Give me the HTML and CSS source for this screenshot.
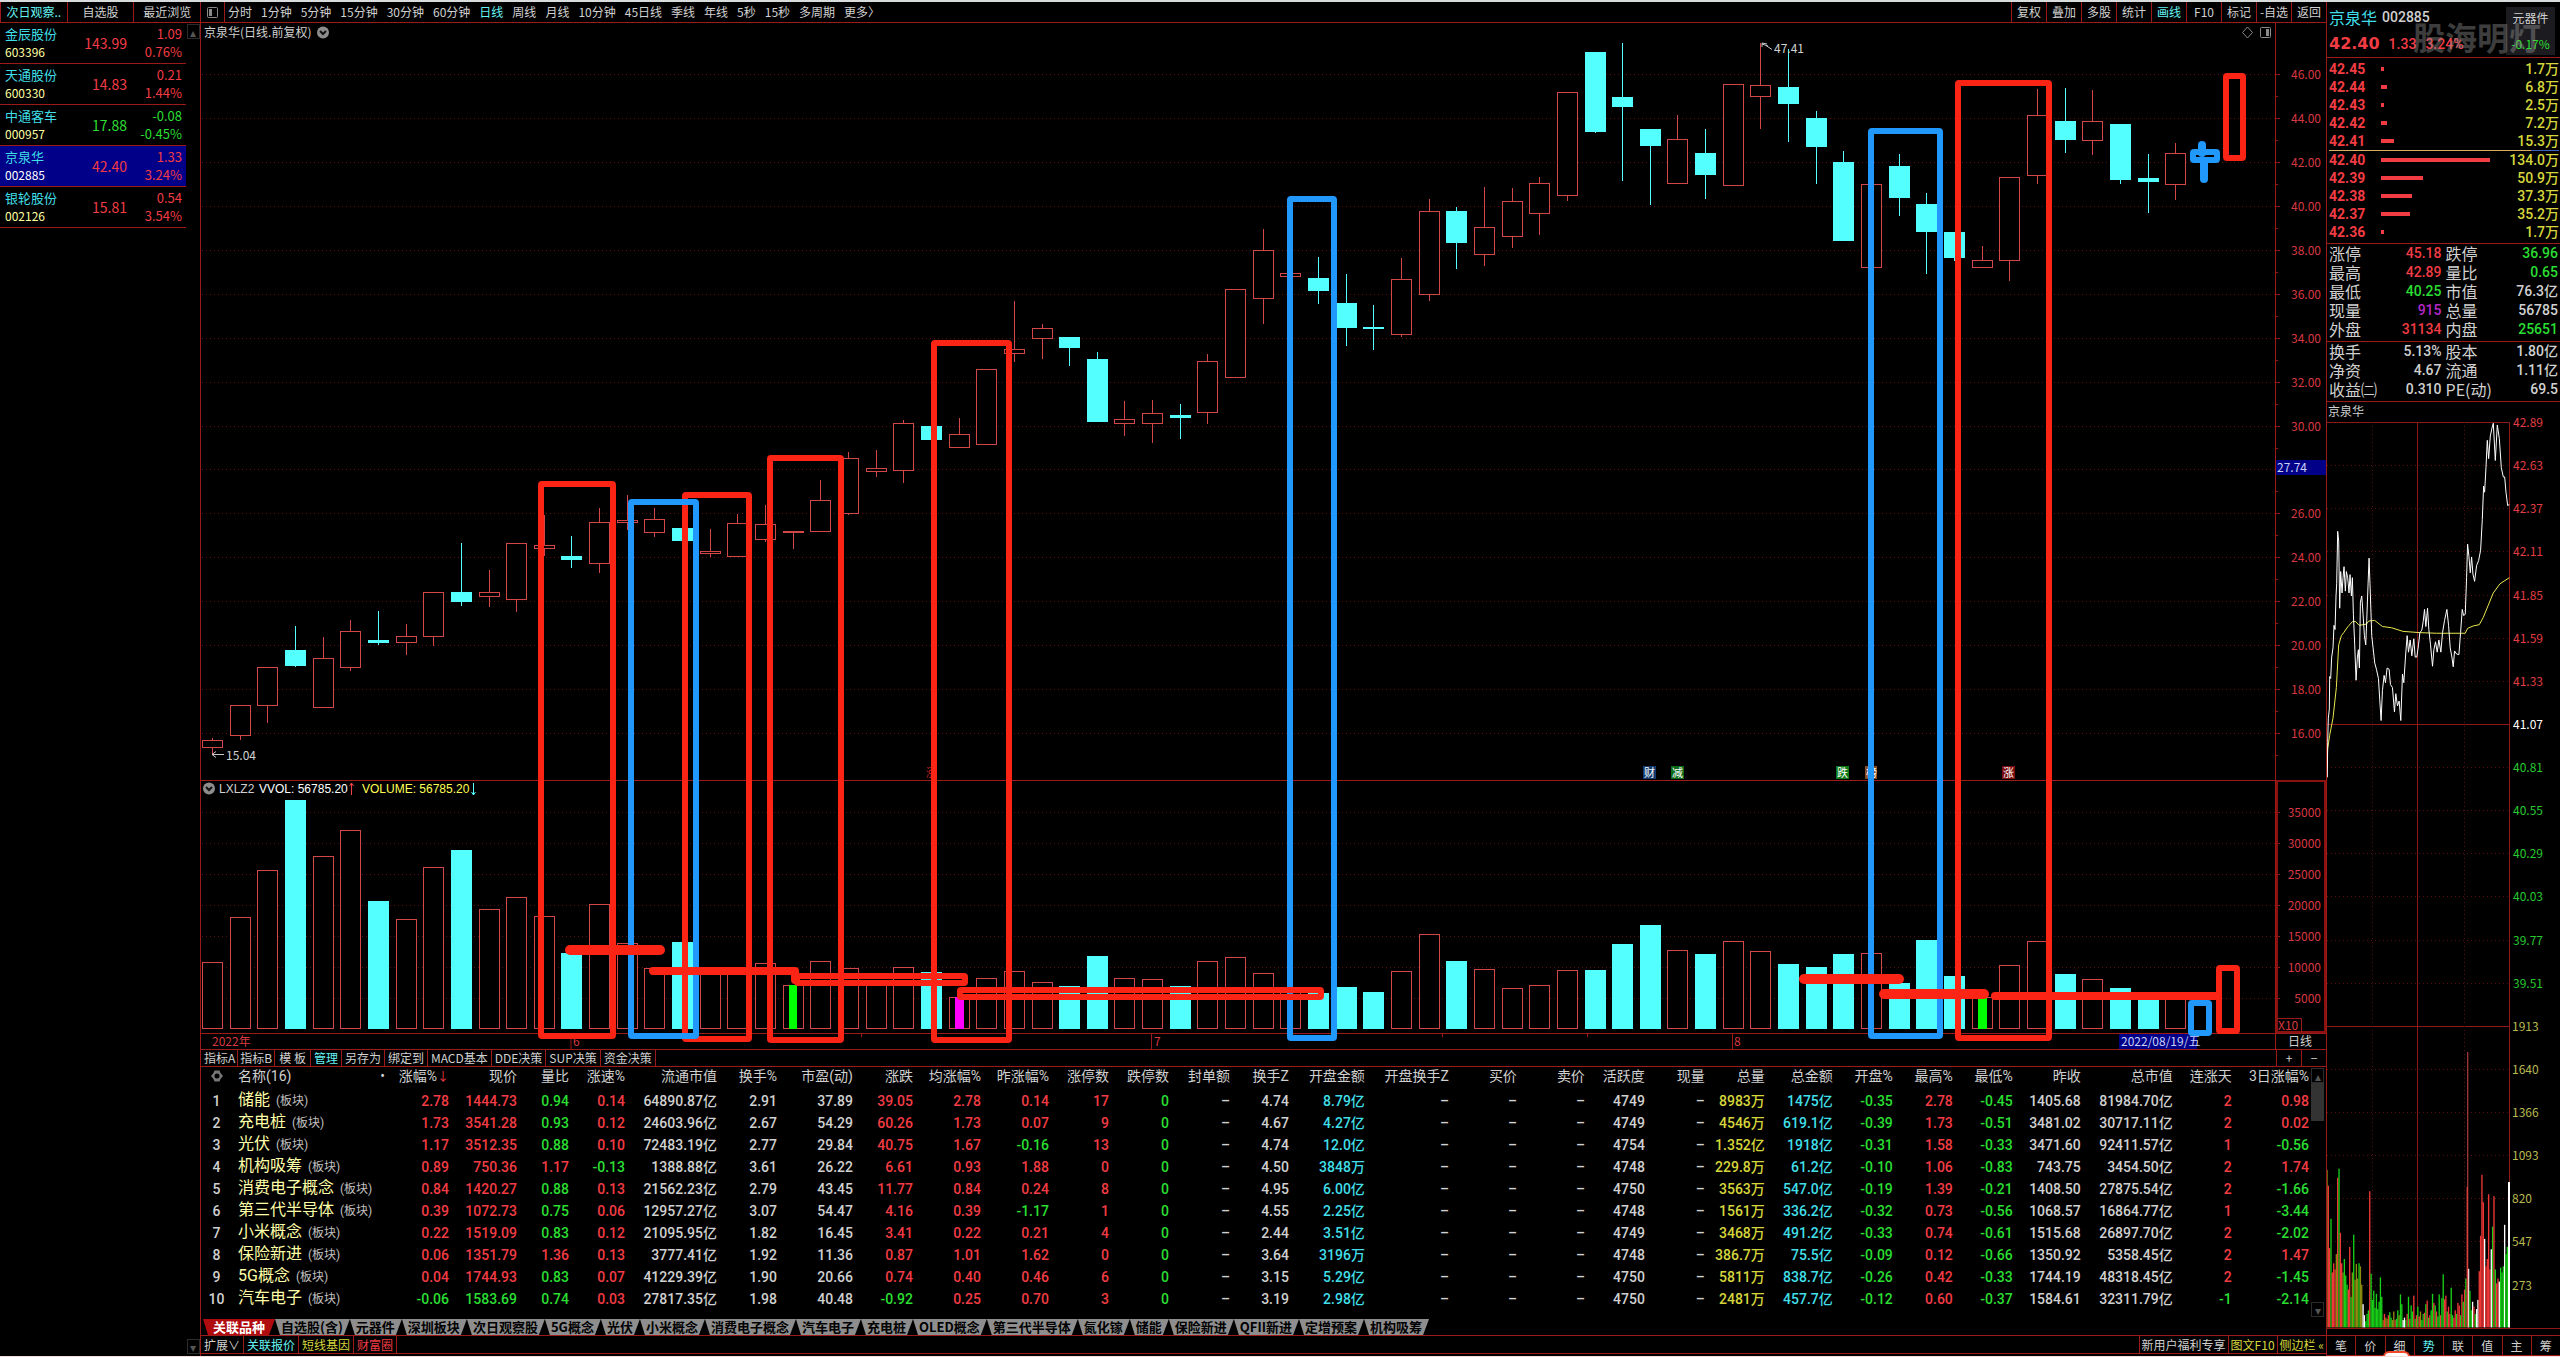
FILE: index.html
```html
<!DOCTYPE html>
<html lang="zh-CN">
<head>
<meta charset="utf-8">
<title>京泉华 002885 日线</title>
<link rel="stylesheet" href="styles.css">
</head>
<body>
<div class="app">

  <aside class="watch">
    <nav class="watch-tabs">
      <button class="on">次日观察..</button><button>自选股</button><button>最近浏览</button>
    </nav>
    <div class="watch-body">
      <ul class="watch-list">
        <li><div class="id"><span class="nm">金辰股份</span><span class="cd">603396</span></div><span class="px up">143.99</span><div class="chg up"><span>1.09</span><span>0.76%</span></div></li>
        <li><div class="id"><span class="nm">天通股份</span><span class="cd">600330</span></div><span class="px up">14.83</span><div class="chg up"><span>0.21</span><span>1.44%</span></div></li>
        <li><div class="id"><span class="nm">中通客车</span><span class="cd">000957</span></div><span class="px down">17.88</span><div class="chg down"><span>-0.08</span><span>-0.45%</span></div></li>
        <li class="sel"><div class="id"><span class="nm">京泉华</span><span class="cd">002885</span></div><span class="px up">42.40</span><div class="chg up"><span>1.33</span><span>3.24%</span></div></li>
        <li><div class="id"><span class="nm">银轮股份</span><span class="cd">002126</span></div><span class="px up">15.81</span><div class="chg up"><span>0.54</span><span>3.54%</span></div></li>
      </ul>
      <div class="scroll slim"><button class="arrow" aria-label="上">▴</button><button class="arrow" aria-label="下">▾</button></div>
    </div>
  </aside>

  <main class="center">
    <nav class="bar">
      <button class="panel-btn" aria-label="面板">
        <svg width="13" height="13" viewBox="0 0 13 13"><rect x="1.5" y="1.5" width="10" height="10" rx="1" fill="none" stroke="#8a8a8a"/><rect x="3" y="3" width="3" height="7" fill="#8a8a8a"/></svg>
      </button>
      <div class="periods">
        <button>分时</button><button>1分钟</button><button>5分钟</button><button>15分钟</button><button>30分钟</button><button>60分钟</button><button class="on">日线</button><button>周线</button><button>月线</button><button>10分钟</button><button>45日线</button><button>季线</button><button>年线</button><button>5秒</button><button>15秒</button><button>多周期</button><button>更多〉</button>
      </div>
      <div class="tools">
        <button>复权</button><button>叠加</button><button>多股</button><button>统计</button><button class="on">画线</button><button>F10</button><button>标记</button><button>-自选</button><button>返回</button>
      </div>
    </nav>

    <svg class="chart" id="chart" viewBox="201 23 2125 1027" role="img" aria-label="京泉华日线">
      <g id="grid"></g>
      <g class="frame">
        <path d="M201 780.5H2326M201 1033.5H2326M201 1049.5H2326M2275.5 23V1050"/>
        <path class="thick" d="M2277 781V1032H2325V781Z"/>
        <path d="M2277.5 1018.5H2301.5V1032M571 1034V1049M1151.5 1034V1049M1732.5 1034V1049M861.5 1034V1037M1442.5 1034V1037M1587.5 1034V1037"/>
      </g>
      <g id="axis" class="ax"></g>
      <text class="t gray" x="204" y="37">京泉华(日线.前复权)</text>
      <circle cx="323" cy="32.5" r="6" fill="#8d8d8d"/><path d="M320 31l3 3 3-3" class="tick"/>
      <path d="M2247.5 27l5 5.500-5 5.500-5-5.500Z" class="ico"/>
      <rect x="2260.500" y="27.500" width="10" height="10" rx="1" class="ico"/><rect x="2266" y="29" width="3" height="7" fill="#8a8a8a"/>
      <circle cx="209" cy="788.500" r="6" fill="#8d8d8d"/><path d="M206 787l3 3 3-3" class="tick"/>
      <g class="lat"><text class="gray" x="219" y="793">LXLZ2</text><text class="white" x="259" y="793">VVOL: 56785.20</text><text class="yellow" x="362" y="793">VOLUME: 56785.20</text></g>
      <path d="M351.500 795V783m-2 3l2-3 2 3" stroke="#f04048" fill="none"/><path d="M473.500 783v12m-2-3l2 3 2-3" stroke="#54ffff" fill="none"/>
      <g id="candles"></g>
      <g id="volumes"></g>
      <path d="M224 754.500H212m4-3l-4 3 4 3M1766 45.500l6 4M1762 47v-4l5 1M1762 44l6 2" class="ptr"/>
      <text class="t gray" x="226" y="760">15.04</text><text class="t gray" x="1774" y="53">47.41</text>
      <g class="marks">
        <rect x="1643" y="766" width="13" height="13" fill="#123a70"/><text x="1644" y="777">财</text>
        <rect x="1671" y="766" width="13" height="13" fill="#0c6a18"/><text x="1672" y="777">减</text>
        <rect x="1836" y="766" width="13" height="13" fill="#0c7a18"/><text x="1837" y="777">跌</text>
        <rect x="1865" y="766" width="12" height="13" fill="#8a4a20"/><text x="1866" y="777">榜</text>
        <rect x="2002" y="766" width="13" height="13" fill="#7a0c0c"/><text x="2003" y="777">涨</text>
        <text x="926" y="777" class="faint">涨</text>
      </g>
      <g class="ax">
        <text x="212" y="1046">2022年</text><text x="573" y="1046">6</text><text x="1154" y="1046">7</text><text x="1734" y="1046">8</text><text x="2278" y="1030">X10</text>
      </g>
      <rect x="2119" y="1034" width="78" height="15" fill="#000088"/><text class="t tag" x="2121" y="1046">2022/08/19/五</text>
      <text class="t gray" x="2288" y="1046">日线</text>
      <rect x="2276" y="460" width="50" height="15" fill="#000088"/><text class="t tag" x="2277" y="472">27.74</text>
      <g id="drawings" class="draw"></g>
    </svg>

    <nav class="indicators">
      <button>指标A</button><button>指标B</button><button>模 板</button><button class="on">管理</button><button>另存为</button><button>绑定到</button><button>MACD基本</button><button>DDE决策</button><button>SUP决策</button><button>资金决策</button>
      <div class="zoomers"><button>+</button><button>−</button></div>
    </nav>

    <section class="sectors">
      <table id="sectors"><colgroup id="cols"></colgroup><thead></thead><tbody></tbody></table>
      <div class="scroll"><button class="arrow" aria-label="上">▴</button><span class="thumb"></span><button class="arrow" aria-label="下">▾</button></div>
    </section>

    <nav class="sheets">
      <button class="first">关联品种</button><button>自选股(含)</button><button>元器件</button><button>深圳板块</button><button>次日观察股</button><button>5G概念</button><button>光伏</button><button>小米概念</button><button>消费电子概念</button><button>汽车电子</button><button>充电桩</button><button>OLED概念</button><button>第三代半导体</button><button>氮化镓</button><button>储能</button><button>保险新进</button><button>QFII新进</button><button>定增预案</button><button>机构吸筹</button>
    </nav>

    <footer class="foot">
      <button>扩展∨</button><button class="cyan">关联报价</button><button class="yellow">短线基因</button><button class="up">财富圈</button>
      <div class="foot-right"><button>新用户福利专享</button><button class="yellow">图文F10</button><button class="yellow">侧边栏 «</button></div>
    </footer>
  </main>

  <aside class="quote">
    <header class="head">
      <div class="row1"><span class="name">京泉华</span><span class="num">002885</span></div>
      <div class="row2 up"><strong>42.40</strong><span>1.33</span><span>3.24%</span></div>
      <a class="industry" href="#"><span>元器件</span><span class="down">-0.17%</span></a>
      <span class="mark">股海明灯</span>
    </header>
    <div class="book" id="book"></div>
    <dl class="stats">
      <div><dt>涨停</dt><dd class="up">45.18</dd></div><div><dt>跌停</dt><dd class="down">36.96</dd></div>
      <div><dt>最高</dt><dd class="up">42.89</dd></div><div><dt>量比</dt><dd class="down">0.65</dd></div>
      <div><dt>最低</dt><dd class="down">40.25</dd></div><div><dt>市值</dt><dd>76.3亿</dd></div>
      <div><dt>现量</dt><dd class="purple">915</dd></div><div><dt>总量</dt><dd>56785</dd></div>
      <div><dt>外盘</dt><dd class="up">31134</dd></div><div><dt>内盘</dt><dd class="down">25651</dd></div>
    </dl>
    <dl class="stats">
      <div><dt>换手</dt><dd>5.13%</dd></div><div><dt>股本</dt><dd>1.80亿</dd></div>
      <div><dt>净资</dt><dd>4.67</dd></div><div><dt>流通</dt><dd>1.11亿</dd></div>
      <div><dt>收益㈡</dt><dd>0.310</dd></div><div><dt>PE(动)</dt><dd>69.5</dd></div>
    </dl>
    <svg class="intraday" id="intraday" viewBox="2327 401 233 933" role="img" aria-label="分时走势">
      <text class="t gray" x="2328" y="415">京泉华</text>
      <g id="igrid"></g>
      <svg x="2326" y="421" width="184" height="906" viewBox="169 35 551 1484" preserveAspectRatio="none">
        <g id="ivol"></g>
        <polyline class="avg" points="172,600 174,570 180,548 190,520 200,470 207,400 215,385 222,380 235,370 248,362 258,362 268,368 280,367 290,366 297,361 315,360 338,370 365,372 400,378 450,380 500,381 540,381 586,381 593,373 610,369 628,367 640,355 655,335 670,315 690,300 718,290"/>
        <polyline class="price" points="173,617 174,560 176,520 179,505 180,452 183,455 186,420 190,405 193,368 196,375 199,320 201,300 204,214 207,230 210,340 213,280 217,315 220,290 223,272 227,312 230,280 234,290 238,315 241,285 245,320 248,290 251,350 255,400 259,458 263,420 266,408 269,438 272,330 276,320 280,350 284,385 288,400 291,360 295,300 298,258 302,320 306,385 310,405 315,430 320,440 326,455 330,490 334,524 338,475 343,450 347,462 352,438 358,440 362,465 368,470 374,510 378,480 383,500 388,492 393,524 398,448 402,462 407,420 412,385 416,412 421,392 426,418 432,390 436,420 441,420 446,400 450,380 456,376 460,362 464,342 468,370 473,340 477,375 482,400 488,435 492,408 497,395 502,412 507,392 513,412 518,380 524,360 531,342 536,368 541,405 546,420 550,436 554,410 560,415 567,416 572,380 577,342 581,352 586,350 590,290 593,235 597,255 601,282 605,256 609,284 614,296 620,270 626,262 632,245 637,195 641,140 644,150 648,110 652,65 656,95 661,58 666,45 670,37 676,98 682,40 688,62 694,110 700,125 704,125 708,150 713,172 718,170"/>
      </svg>
    </svg>
    <nav class="side-tabs">
      <button>笔</button><button>价</button><button>细</button><button class="on">势</button><button>联</button><button>值</button><button>主</button><button>筹</button>
      <span class="sticker"></span>
    </nav>
  </aside>
</div>
<script src="app.js"></script>
</body>
</html>
```
FILE: styles.css
```css
* { box-sizing: border-box; }
:root {
  --line: #9c1a1a;
  --up: #f23c44;
  --down: #2ade32;
  --text: #d0d0d0;
  --cyan: #40dfe8;
  --yellow: #d6d63c;
  --cjk: "Noto Sans CJK SC", sans-serif;
  --num: Roboto, "Noto Sans CJK SC", sans-serif;
}
body {
  margin: 0;
  background: #000;
  color: var(--text);
  font: 12px/16px var(--cjk);
  border-top: 2px solid #d8dcdc;
  border-bottom: 2px solid #f4dede;
  min-height: 100vh;
}
button {
  margin: 0;
  padding: 0;
  border: 0;
  background: none;
  color: inherit;
  font: inherit;
  white-space: nowrap;
}
.up { color: var(--up); }
.down { color: var(--down); }
.cyan, .on { color: #66f4f4; }
.yellow { color: var(--yellow); }
.purple { color: #b428c8; }

.app {
  display: grid;
  grid-template-columns: 201px minmax(0, 1fr) 234px;
}

/* watch list */
.watch { border-right: 1px solid var(--line); display: flex; flex-direction: column; }
.watch-tabs { display: flex; height: 21px; border-bottom: 1px solid var(--line); }
.watch-tabs button { width: 67px; border-left: 1px solid var(--line); }
.watch-body { display: flex; flex: 1; }
.watch-list { list-style: none; margin: 0; padding: 0; flex: 1; }
.watch-list li {
  display: grid;
  grid-template-columns: 64px 63px 1fr;
  align-items: center;
  height: 41px;
  padding-right: 4px;
  border-bottom: 1px solid var(--line);
}
.sel { background: #000088; }
.id, .chg { display: flex; flex-direction: column; line-height: 18px; }
.id { padding-left: 5px; }
.nm { color: var(--cyan); font-size: 13px; }
.cd { color: #ffffa0; }
.sel .cd { color: #fff; }
.px { font-size: 14px; text-align: right; }
.chg { font-size: 13px; text-align: right; }
.scroll { width: 17px; display: flex; flex-direction: column; align-items: center; padding: 1px 0 2px; }
.slim { width: 14px; }
.arrow { width: 13px; height: 15px; border: 1px solid #2c2c2c; color: #555; line-height: 12px; }
.scroll .arrow:last-child { margin-top: auto; }
.thumb { width: 13px; height: 38px; background: #333; }

/* top bar */
.center { display: flex; flex-direction: column; min-width: 0; }
.bar { display: flex; height: 21px; border-bottom: 1px solid var(--line); }
.panel-btn { width: 24px; border-right: 1px solid var(--line); display: flex; align-items: center; justify-content: center; }
.periods { display: flex; gap: 9px; padding-left: 3px; flex: 1; }
.tools { display: flex; }
.tools button { width: 35px; border-left: 1px solid var(--line); }

/* daily chart */
.chart, .intraday { display: block; width: 100%; height: auto; }
.t, .ax text, .marks text { font: 12px var(--cjk); }
.ax text { fill: #d83840; }
.ax .end { text-anchor: end; }
.lat text { font: 12px "Liberation Sans", sans-serif; }
.gray { fill: #d0d0d0; }
.white { fill: #fff; }
text.yellow { fill: #ffff54; }
.tag { fill: #c8d0f8; }
.marks text { font-size: 11px; fill: #fff; }
.marks .faint { fill: #d02020; }
.frame path { stroke: var(--line); fill: none; }
.frame .thick { stroke: #8c1212; stroke-width: 2; }
.dots { stroke: #5a1010; stroke-dasharray: 1 3; fill: none; }
.solid { stroke: #8c1818; fill: none; }
.ico { stroke: #8a8a8a; fill: none; }
.tick { stroke: #111; stroke-width: 2; fill: none; }
.ptr { stroke: #c8c8c8; fill: none; }
.rise { stroke: #d24848; fill: #000; }
.rise-w { stroke: #d24848; fill: none; }
.fall { fill: #54ffff; }
.fall-w { stroke: #54ffff; }
.draw { fill: none; stroke-width: 6; stroke-linecap: round; stroke-linejoin: round; }
.r { stroke: #fc2414; }
.b { stroke: #2098fc; }
.w8 { stroke-width: 8; }
.w10 { stroke-width: 10; }

/* indicator row */
.indicators { display: flex; height: 17px; border-bottom: 1px solid var(--line); padding-left: 1px; }
.indicators button { padding: 0 3px; border-right: 1px solid var(--line); line-height: 16px; }
.indicators button:nth-child(-n+2) { padding: 0 2px; }
.indicators button:nth-child(3) { padding: 0 4px; }
.zoomers { display: flex; margin-left: auto; }
.zoomers button:nth-child(n) { width: 25px; border-right: 0; border-left: 1px solid var(--line); }

/* sector table */
.sectors { display: flex; height: 252px; }
.sectors table {
  flex: 1;
  width: 100%;
  height: 242px;
  table-layout: fixed;
  border-collapse: collapse;
  font: 500 14px/20px var(--num);
}
.sectors th, .sectors td { padding: 0; height: 22px; text-align: right; white-space: nowrap; overflow: visible; }
.sectors th { font-weight: 400; line-height: 18px; vertical-align: top; }
.sectors td { padding-top: 1px; }
.sectors td:first-child, .sectors th:first-child { text-align: center; }
.sectors th:first-child { padding-top: 2px; }
.sectors td:nth-child(2), .sectors th:nth-child(2) { text-align: left; padding-left: 6px; }
.sectors th:nth-child(2) span { float: right; }
.sectors td:nth-child(2) { font-size: 16px; font-weight: 400; color: #ffffa8; }
.sectors small { font-size: 12px; color: #c0c0c0; margin-left: 6px; }
.sectors i { color: var(--up); font-style: normal; font-size: 12px; }
.sectors .c { color: var(--cyan); }

/* sheets */
.sheets { display: flex; height: 17px; padding-left: 2px; border-bottom: 1px solid var(--line); }
.sheets button {
  padding: 0 7px 0 6px;
  background: #8e8e8e;
  color: #000;
  font: 700 13px/16px var(--cjk);
  clip-path: polygon(0 0, 100% 0, calc(100% - 6px) 100%, 5px 100%);
}
.sheets .first { padding: 0 10px; background: #b00c10; color: #fff; }

.foot { display: flex; height: 18px; border-bottom: 1px solid var(--line); }
.foot button { padding: 0 3px; border-right: 1px solid var(--line); }
.foot-right { display: flex; margin-left: auto; border-left: 1px solid var(--line); }
.foot-right button { padding: 0 2px; }
.foot-right button:last-child { border-right: 0; }

/* quote panel */
.quote { border-left: 1px solid var(--line); display: flex; flex-direction: column; }
.head { position: relative; height: 56px; padding: 5px 0 0 2px; border-bottom: 1px solid var(--line); }
.row1 { display: flex; gap: 5px; align-items: center; height: 20px; }
.name { color: var(--cyan); font-size: 16px; }
.num, .row2 { font: 500 14px/20px var(--num); }
.row2 { display: flex; gap: 9px; align-items: center; height: 34px; }
.row2 strong { font: 700 16px/20px "DejaVu Sans", sans-serif; }
.industry {
  position: absolute;
  top: 5px;
  right: 5px;
  width: 49px;
  height: 48px;
  background: #1c1c20;
  color: var(--text);
  text-decoration: none;
  display: flex;
  flex-direction: column;
  align-items: center;
  justify-content: space-between;
  padding: 3px 0;
}
.industry .down { color: var(--down); }
.mark { position: absolute; right: 19px; top: 12px; font: 700 32px/44px var(--cjk); color: #a0a0a0; opacity: .38; }
.book { padding: 2px 1px 0 2px; border-bottom: 1px solid var(--line); height: 186px; }
.lv { display: grid; grid-template-columns: 52px 1fr auto; align-items: center; height: 18px; font: 500 14px/18px var(--num); }
.lv b { color: var(--up); font-weight: 700; }
.lv i { height: 4px; background: var(--up); }
.lv span { color: var(--yellow); }
.mid { height: 1px; border: 0; margin: 0; background: linear-gradient(90deg, #d8b060 88%, #4060c0 88%); }
.stats { margin: 0; padding: 0 2px 2px 2px; display: grid; grid-template-columns: 1fr 1fr; column-gap: 4px; border-bottom: 1px solid var(--line); }
.stats div { display: flex; justify-content: space-between; height: 19px; font: 500 14px/19px var(--num); white-space: nowrap; }
.stats dt { font: 16px/19px var(--cjk); }
.stats dd { margin: 0; }
.intraday .avg, .intraday .price { fill: none; vector-effect: non-scaling-stroke; }
.intraday .avg { stroke: #e8e850; }
.intraday .price { stroke: #fff; }
.side-tabs { position: relative; display: flex; height: 21px; border-top: 1px solid var(--line); border-bottom: 1px solid var(--line); }
.side-tabs button { flex: 1; border-right: 1px solid var(--line); }
.side-tabs button:nth-child(8) { border-right: 0; }
.sticker { position: absolute; left: 56px; bottom: -2px; width: 27px; height: 6px; border: 2px solid #f04828; border-bottom: 0; border-radius: 6px 6px 0 0; background: #fff; }
```
FILE: app.js
```js
const $ = id => document.getElementById(id);

/* Daily bars: kind (r rising / f falling), body top, body bottom, high, low, volume top */
const bars = `r740,747,738,754,962 r705,735,705,740,917 r667,705,667,723,870 f650,666,626,667,800 r658,707,637,707,856
r631,667,620,671,830 f640,643,611,645,901 r636,642,624,655,919 r592,636,592,646,867 f592,602,543,606,850
r592,596,570,607,909 r543,599,543,612,897 r545,548,515,556,916 f556,560,536,568,953 r522,563,508,573,904
r520,522,495,530,943 r519,532,508,537,968 f528,541,517,566,942 r551,553,529,557,973 r523,556,514,556,972
r524,539,505,542,963 r531,532,531,549,985 r500,531,480,531,961 r458,513,452,515,968 r468,471,450,477,980
r423,470,420,483,967 f426,440,426,440,972 r434,447,418,447,997 r369,444,369,444,978 r349,353,301,362,971
r328,338,324,359,982 f337,348,337,366,986 f359,422,352,422,956 r419,423,401,436,978 r413,423,400,443,979
f415,418,404,439,986 r361,412,354,424,961 r289,377,289,377,957 r250,298,229,324,973 r273,276,273,276,990
f278,291,257,304,993 f303,328,274,346,987 f327,329,305,350,992 r279,334,258,337,971 r211,294,199,301,934
f211,243,207,269,961 r227,254,187,266,969 r201,236,188,248,988 r183,213,177,235,985 r92,195,92,201,970
f52,132,52,133,970 f97,107,43,181,944 f129,146,129,205,925 r139,183,115,184,950 f153,175,129,199,954
r84,185,84,185,941 r85,96,43,129,951 f87,104,49,142,964 f118,147,111,184,967 f162,241,151,241,954
r184,267,184,267,953 f166,198,154,216,983 f204,232,193,274,940 f232,258,232,261,976 r260,267,246,267,997
r177,260,177,281,965 r115,175,89,184,941 f121,140,88,153,974 r121,140,90,155,979 f124,180,124,184,988
f178,182,154,213,998 r153,184,143,200,998`.split(/\s+/).map(s => [s[0], ...s.slice(1).split(',').map(Number)]);

let candles = '', volumes = '';
const wick = (c, x, a, b) => a === b ? '' : `<path class="${c}" d="M${x} ${a}V${b}"/>`;
bars.forEach(([k, top, bot, hi, lo, vol], i) => {
  const cx = Math.round(212 + 27.65 * i) + .5, x = cx - 10;
  if (k === 'r') {
    candles += wick('rise-w', cx, hi, top + .5) + wick('rise-w', cx, bot + .5, lo)
      + `<rect class="rise" x="${x}" y="${top + .5}" width="20" height="${bot - top}"/>`;
    volumes += `<rect class="rise" x="${x}" y="${vol + .5}" width="20" height="${1028 - vol}"/>`;
  } else {
    candles += wick('fall-w', cx, hi, lo) + `<rect class="fall" x="${x - .5}" y="${top}" width="21" height="${bot - top}"/>`;
    volumes += `<rect class="fall" x="${x - .5}" y="${vol}" width="21" height="${1029 - vol}"/>`;
  }
});
volumes += '<rect x="789" y="985" width="8" height="44" fill="#0f0"/><rect x="955" y="997" width="9" height="32" fill="#f0f"/><rect x="1978" y="996" width="9" height="33" fill="#0f0"/>';
$('candles').innerHTML = candles;
$('volumes').innerHTML = volumes;

/* Grid and scales */
let grid = '', axis = '';
for (let p = 46; p >= 16; p -= 2) {
  const y = Math.round(74 + (46 - p) * 21.97) + .5;
  grid += `<path class="dots" d="M202 ${y}H2275"/>`;
  axis += `<path class="solid" d="M2275 ${y}h5M2275 ${y + 22}h3"/>`;
  if (p !== 28) axis += `<text class="end" x="2321" y="${y + 4}">${p}.00</text>`;
}
for (let v = 35; v >= 5; v -= 5) {
  const y = Math.round(812 + (35 - v) * 6.2) + .5;
  grid += `<path class="dots" d="M202 ${y}H2275"/>`;
  axis += `<path class="solid" d="M2275 ${y}h5"/><text class="end" x="2321" y="${y + 4}">${v}000</text>`;
}
$('grid').innerHTML = grid;
$('axis').innerHTML = axis;

/* Hand-drawn boxes: colour, x1, y1, x2, y2 */
const boxes = [['r', 541, 484, 613, 1036], ['r', 685, 495, 749, 1039], ['b', 631, 502, 696, 1036], ['r', 770, 458, 841, 1040],
  ['r', 934, 343, 1009, 1040], ['b', 1290, 199, 1334, 1038], ['b', 1871, 131, 1940, 1036], ['r', 1958, 83, 2049, 1038],
  ['r', 2226, 76, 2243, 158], ['b', 2193, 152, 2217, 160], ['b', 2191, 1003, 2209, 1033],
  ['r', 797, 976, 965, 983], ['r', 960, 990, 1321, 997], ['r', 2219, 968, 2237, 1031]];
const strokes = [['r w10', 'M570 950H660'], ['r w8', 'M653 971H795V980'], ['r w10', 'M1804 979H1899'], ['r w10', 'M1884 994H1984'],
  ['r w8', 'M1995 996H2218'], ['b w8', 'M2202 145V153'], ['b w8', 'M2204 162V179']];
$('drawings').innerHTML = boxes.map(([c, x, y, u, v]) => `<rect class="${c}" x="${x}" y="${y}" width="${u - x}" height="${v - y}" rx="1"/>`).join('')
  + strokes.map(([c, d]) => `<path class="${c}" d="${d}"/>`).join('');

/* Intraday */
let ig = '<path class="solid" d="M2327 421.500H2509.500V1327M2417.500 421V1327M2327 723.500H2510M2327 1025.500H2510M2327 1327.500H2560"/><path class="dots" d="M2372.500 421V1327M2464.500 421V1327"/>';
for (let i = 0; i <= 20; i++) {
  const y = Math.round(421 + 43.13 * i) + .5;
  if (i % 7) ig += `<path class="dots" d="M2327 ${y}H2510"/>`;
  const label = i < 14 ? (42.89 - .26 * i).toFixed(2) : [1913, 1640, 1366, 1093, 820, 547, 273][i - 14];
  const col = i < 7 ? '#e03c44' : i === 7 ? '#fff' : i < 14 ? '#28c830' : '#b8b850';
  ig += `<text class="t" x="${i < 14 ? 2513 : 2512}" y="${y + 4}" fill="${col}">${label}</text>`;
}
$('igrid').innerHTML = ig;

const tone = { r: '#f03838', g: '#18d018', o: '#8c8c10', w: '#fff' };
const ticks = `o258 r232 r130 g178 r90 r105 r95 o120 r245 g260 r155 r105 o90 g112 g85 g70 r62 r132 g50 o90 g152 o78 o104 o80 g105 o100 o70 w38 w20 g10
g22 g28 r223 g88 g45 g60 g32 g55 g30 g42 g82 g50 o12 r22 o16 o14 r20 g25 g16 o12 o26 r12 g14 g28 o20 g54 g38 w12 w16 g12
r22 g50 r14 g36 g26 r52 g14 r20 g34 r18 o26 g12 g22 r24 g38 r44 g16 r20 g28 g55 r40 g36 r26 g18 g54 r20 g48 g87 r46 r52
g26 r34 r22 g65 g20 r16 r28 g22 r40 r36 g20 r54 g42 r62 g80 r230 w96 g60 g28 w42 r34 g22 w30 w45 r92 r150 r250 r205
w145 r100 r112 r218 r95 w128 g165 r215 g95 r72 r80 w75 g98 g90 g100 w168 g120 g132 w238`.split(/\s+/);
$('ivol').innerHTML = ticks.map((t, k) => `<rect x="${170 + k * 4}" y="${1518 - t.slice(1)}" width="4" height="${t.slice(1)}" fill="${tone[t[0]]}"/>`).join('')
  + '<rect x="592" y="1067" width="3" height="451" fill="#d04848"/><rect x="717" y="1280" width="3" height="238" fill="#fff"/>';

/* Order book */
const book = [['42.45', 3, '1.7万'], ['42.44', 6, '6.8万'], ['42.43', 3, '2.5万'], ['42.42', 6, '7.2万'], ['42.41', 13, '15.3万'],
  ['42.40', 109, '134.0万'], ['42.39', 42, '50.9万'], ['42.38', 31, '37.3万'], ['42.37', 29, '35.2万'], ['42.36', 3, '1.7万']];
$('book').innerHTML = book.map(([p, w, v], i) => (i === 5 ? '<hr class="mid">' : '')
  + `<div class="lv"><b>${p}</b><i style="width:${w}px"></i><span>${v}</span></div>`).join('');

/* Sector table */
const widths = [31, 153, 64, 68, 52, 56, 92, 60, 76, 60, 68, 68, 60, 60, 61, 59, 76, 84, 68, 68, 60, 60, 60, 68, 60, 60, 60, 68, 92, 59, 77];
$('cols').innerHTML = widths.map(w => `<col style="width:${(w / 21.08).toFixed(3)}%">`).join('');
const heads = '涨幅%<i>↓</i> 现价 量比 涨速% 流通市值 换手% 市盈(动) 涨跌 均涨幅% 昨涨幅% 涨停数 跌停数 封单额 换手Z 开盘金额 开盘换手Z 买价 卖价 活跃度 现量 总量 总金额 开盘% 最高% 最低% 昨收 总市值 连涨天 3日涨幅%'.split(' ');
const gear = '<svg width="14" height="14" viewBox="0 0 14 14"><path d="M4.500 1.500h5L10.500 4 13 7l-2.500 3-1 2.500h-5L3.500 10 1 7l2.500-3Z" fill="#777"/><circle cx="7" cy="7" r="2.500" fill="#000"/></svg>';
const table = $('sectors');
table.tHead.innerHTML = `<tr><th>${gear}</th><th>名称(16)<span>•</span></th>${heads.map(h => `<th>${h}</th>`).join('')}</tr>`;
/* u up, d down, c cyan, y yellow; plain cells have no prefix */
const rows = `储能 u2.78 u1444.73 d0.94 u0.14 64890.87亿 2.91 37.89 u39.05 u2.78 u0.14 u17 4.74 c8.79亿 4749 y8983万 c1475亿 d-0.35 u2.78 d-0.45 1405.68 81984.70亿 u2 u0.98
充电桩 u1.73 u3541.28 d0.93 u0.12 24603.96亿 2.67 54.29 u60.26 u1.73 u0.07 u9 4.67 c4.27亿 4749 y4546万 c619.1亿 d-0.39 u1.73 d-0.51 3481.02 30717.11亿 u2 u0.02
光伏 u1.17 u3512.35 d0.88 u0.10 72483.19亿 2.77 29.84 u40.75 u1.67 d-0.16 u13 4.74 c12.0亿 4754 y1.352亿 c1918亿 d-0.31 u1.58 d-0.33 3471.60 92411.57亿 u1 d-0.56
机构吸筹 u0.89 u750.36 u1.17 d-0.13 1388.88亿 3.61 26.22 u6.61 u0.93 u1.88 u0 4.50 c3848万 4748 y229.8万 c61.2亿 d-0.10 u1.06 d-0.83 743.75 3454.50亿 u2 u1.74
消费电子概念 u0.84 u1420.27 d0.88 u0.13 21562.23亿 2.79 43.45 u11.77 u0.84 u0.24 u8 4.95 c6.00亿 4750 y3563万 c547.0亿 d-0.19 u1.39 d-0.21 1408.50 27875.54亿 u2 d-1.66
第三代半导体 u0.39 u1072.73 d0.75 u0.06 12957.27亿 3.07 54.47 u4.16 u0.39 d-1.17 u1 4.55 c2.25亿 4748 y1561万 c336.2亿 d-0.32 u0.73 d-0.56 1068.57 16864.77亿 u1 d-3.44
小米概念 u0.22 u1519.09 d0.83 u0.12 21095.95亿 1.82 16.45 u3.41 u0.22 u0.21 u4 2.44 c3.51亿 4749 y3468万 c491.2亿 d-0.33 u0.74 d-0.61 1515.68 26897.70亿 u2 d-2.02
保险新进 u0.06 u1351.79 u1.36 u0.13 3777.41亿 1.92 11.36 u0.87 u1.01 u1.62 u0 3.64 c3196万 4748 y386.7万 c75.5亿 d-0.09 u0.12 d-0.66 1350.92 5358.45亿 u2 u1.47
5G概念 u0.04 u1744.93 d0.83 u0.07 41229.39亿 1.90 20.66 u0.74 u0.40 u0.46 u6 3.15 c5.29亿 4750 y5811万 c838.7亿 d-0.26 u0.42 d-0.33 1744.19 48318.45亿 u2 d-1.45
汽车电子 d-0.06 d1583.69 d0.74 u0.03 27817.35亿 1.98 40.48 d-0.92 u0.25 u0.70 u3 3.19 c2.98亿 4750 y2481万 c457.7亿 d-0.12 u0.60 d-0.37 1584.61 32311.79亿 d-1 d-2.14`.split('\n');
const cls = { u: 'up', d: 'down', c: 'c', y: 'yellow' };
table.tBodies[0].innerHTML = rows.map((line, n) => {
  const [name, ...v] = line.split(' ');
  v.splice(11, 0, 'd0', '–');
  v.splice(15, 0, '–', '–', '–');
  v.splice(19, 0, '–');
  return `<tr><td>${n + 1}</td><td>${name}<small>(板块)</small></td>${v.map(c => cls[c[0]] ? `<td class="${cls[c[0]]}">${c.slice(1)}</td>` : `<td>${c}</td>`).join('')}</tr>`;
}).join('');
```
